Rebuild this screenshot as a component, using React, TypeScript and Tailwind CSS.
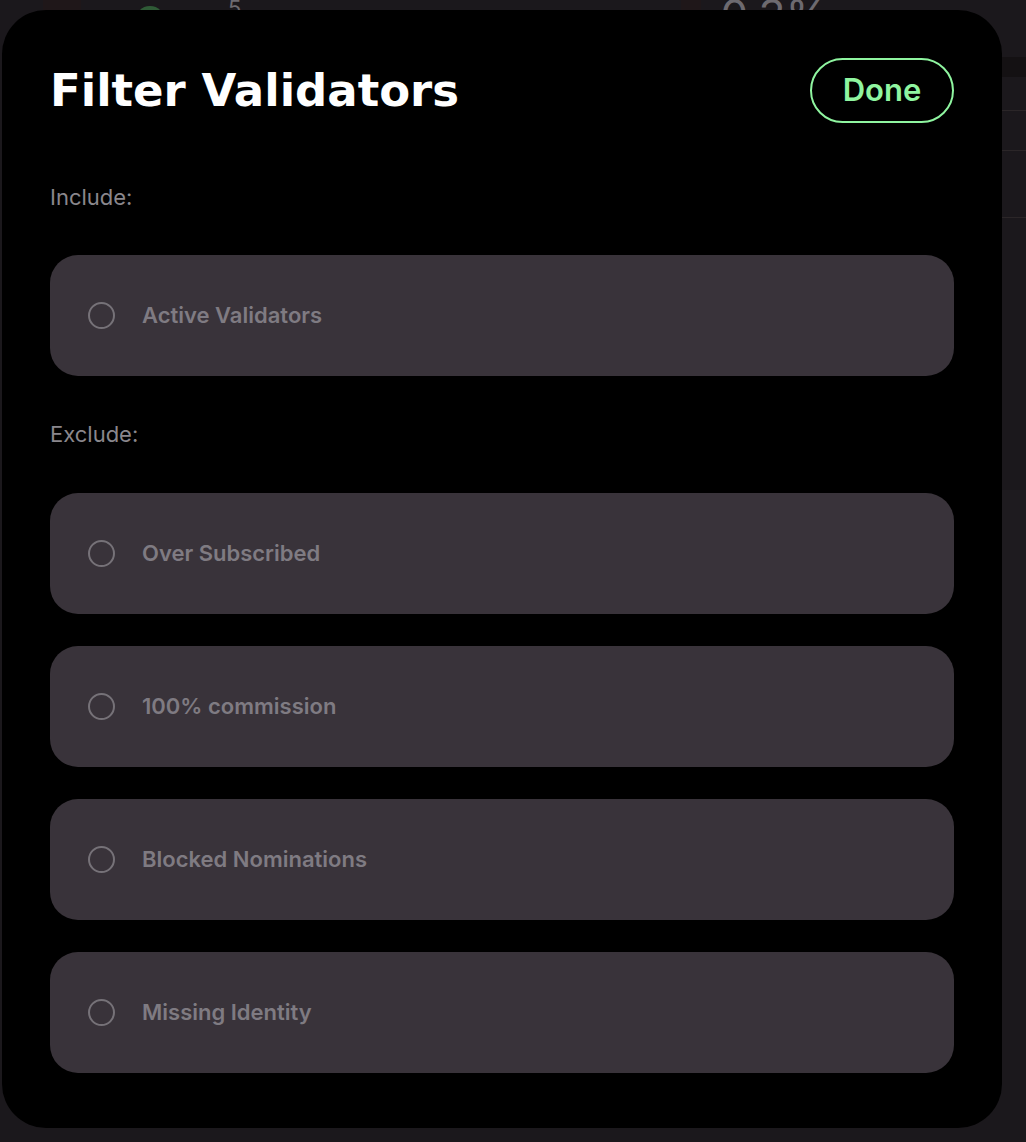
import React from "react";

function Row({ label }: { label: string }) {
  return (
    <div className="flex h-[121px] w-full items-center rounded-[28px] bg-[#39333a] pl-[38px]">
      <span className="box-border block h-[27px] w-[27px] shrink-0 rounded-full border-2 border-[#767278]" />
      <span className="ml-[27px] text-[22px] font-semibold text-[#7f7b82]">{label}</span>
    </div>
  );
}

export default function App() {
  return (
    <div
      className="relative h-[1142px] w-[1026px] overflow-hidden bg-[#1b181c]"
      style={{ fontFamily: "Inter, 'Noto Sans', sans-serif" }}
    >
      {/* faint background page */}
      <div className="flex h-[40px] items-start">
        <div className="ml-[43px] h-[40px] w-[38px] bg-[#1f1719]" />
        <div className="ml-[54px] mt-[6px] h-[30px] w-[30px] rounded-full bg-[#2f5a36]" />
        <div className="ml-[63px] mt-[-8px] text-[22px] text-[#6d6a70]">5</div>
        <div className="ml-[440px] h-[40px] w-[20px] bg-[#1f1719]" />
        <div className="ml-[19px] mt-[-18px] text-[44px] text-[#6d6a70]">0.3%</div>
      </div>
      <div className="absolute right-0 top-[57px] h-[20px] w-[30px] bg-[#141113]" />
      <div className="absolute right-0 top-[110px] h-px w-[30px] bg-[#2b2628]" />
      <div className="absolute right-0 top-[150px] h-px w-[30px] bg-[#2b2628]" />
      <div className="absolute right-0 top-[217px] h-px w-[30px] bg-[#2b2628]" />
      <div className="absolute right-0 top-[490px] h-[420px] w-[30px] bg-[#1e1b1f]" />

      {/* modal */}
      <div className="absolute left-[2px] top-[10px] flex h-[1118px] w-[1000px] flex-col rounded-[44px] bg-black px-[48px] pt-[48px]">
        <div className="flex h-[65px] items-center justify-between">
          <h1
            className="text-[45px] font-bold leading-none text-white"
            style={{ fontFamily: "'DejaVu Sans', Inter, sans-serif" }}
          >
            Filter Validators
          </h1>
          <button className="flex h-[65px] w-[144px] items-center justify-center rounded-full border-2 border-[#8ff5a0] text-[31px] font-semibold text-[#8ff5a0]">
            Done
          </button>
        </div>
        <div className="mt-[62px] text-[22px] leading-[24px] text-[#8a878c]">Include:</div>
        <div className="mt-[46px]">
          <Row label="Active Validators" />
        </div>
        <div className="mt-[46px] text-[22px] leading-[24px] text-[#8a878c]">Exclude:</div>
        <div className="mt-[47px] flex flex-col gap-[32px]">
          <Row label="Over Subscribed" />
          <Row label="100% commission" />
          <Row label="Blocked Nominations" />
          <Row label="Missing Identity" />
        </div>
      </div>
    </div>
  );
}
